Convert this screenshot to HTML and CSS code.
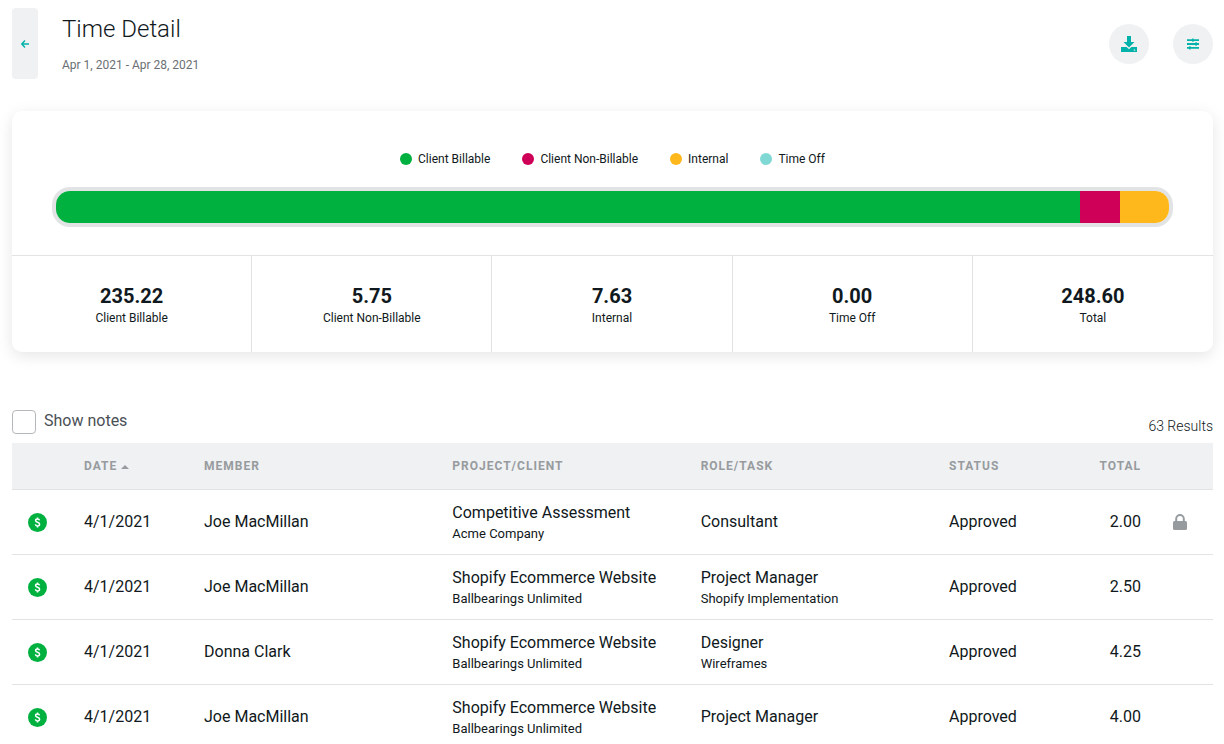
FILE: index.html
```html
<!DOCTYPE html>
<html lang="en">
<head>
  <meta charset="UTF-8" />
  <meta name="viewport" content="width=device-width, initial-scale=1" />
  <title>Time Detail</title>
  <link rel="stylesheet" href="styles.css">
</head>
<body>

  <header class="page-header">
    <button class="back-button" type="button" aria-label="Back">
      <svg width="8" height="8" viewBox="0 0 8 8" fill="none" stroke="currentColor" stroke-width="1.4" aria-hidden="true">
        <path d="M8 4H1M4 0.6L0.8 4L4 7.4" />
      </svg>
    </button>
    <div class="heading">
      <h1>Time Detail</h1>
      <p class="date-range">Apr 1, 2021 - Apr 28, 2021</p>
    </div>
    <div class="actions">
      <button class="round-button" type="button" aria-label="Download">
        <svg width="16" height="16" viewBox="0 0 16 16" fill="currentColor" aria-hidden="true">
          <path d="M6 0h4v6h3.5L8 11.4L2.5 6H6z" />
          <path d="M0 11h5.6L8 13.2L10.4 11H16v5H0zM12.8 13.6v1.2h1.4v-1.2z" fill-rule="evenodd" />
        </svg>
      </button>
      <button class="round-button" type="button" aria-label="Filters">
        <svg width="12" height="12" viewBox="0 0 12 12" fill="currentColor" aria-hidden="true">
          <path d="M0 1.2h12v1.8H0zM0 5.1h12v1.8H0zM0 9h12v1.8H0z" />
          <path d="M5.2 0.4h1.4v3.4H5.2zM8.4 4.3h1.4v3.4H8.4zM2.2 8.2h1.4v3.4H2.2z" />
        </svg>
      </button>
    </div>
  </header>

  <section class="summary" aria-label="Time summary">
    <div class="chart">
      <ul class="legend">
        <li><span class="dot billable"></span>Client Billable</li>
        <li><span class="dot non-billable"></span>Client Non-Billable</li>
        <li><span class="dot internal"></span>Internal</li>
        <li><span class="dot time-off"></span>Time Off</li>
      </ul>
      <div class="bar">
        <div class="billable" style="width: 92%"></div>
        <div class="non-billable" style="width: 3.6%"></div>
        <div class="internal" style="width: 4.4%"></div>
      </div>
    </div>
    <div class="stats">
      <div class="stat"><strong>235.22</strong><span>Client Billable</span></div>
      <div class="stat"><strong>5.75</strong><span>Client Non-Billable</span></div>
      <div class="stat"><strong>7.63</strong><span>Internal</span></div>
      <div class="stat"><strong>0.00</strong><span>Time Off</span></div>
      <div class="stat"><strong>248.60</strong><span>Total</span></div>
    </div>
  </section>

  <div class="toolbar">
    <label class="show-notes"><input type="checkbox" />Show notes</label>
    <span class="results">63 Results</span>
  </div>

  <!-- Shared icons for the table rows -->
  <svg class="sprite" aria-hidden="true">
    <symbol id="dollar" viewBox="0 0 20 20">
      <circle cx="10" cy="10" r="10" fill="#00b140" />
      <path d="M12.1 7.8C11.9 6.9 11.1 6.4 10 6.4c-1.2 0-2 .6-2 1.6 0 2.2 4.2 1.4 4.2 3.8 0 1.1-.9 1.8-2.2 1.8-1.2 0-2.1-.6-2.2-1.7M10 4.7v1.8M10 13.5v1.8" fill="none" stroke="#fff" stroke-width="1.6" />
    </symbol>
    <symbol id="lock" viewBox="0 0 14 16">
      <rect x="0" y="7" width="14" height="9" rx="1.5" fill="#979b9e" />
      <path d="M3.2 7.5V4.8a3.8 3.8 0 0 1 7.6 0v2.7" fill="none" stroke="#979b9e" stroke-width="2" />
    </symbol>
  </svg>

  <table class="entries">
    <thead>
      <tr>
        <th class="col-icon"></th>
        <th class="col-date">Date <span class="sort-up"></span></th>
        <th>Member</th>
        <th>Project/Client</th>
        <th>Role/Task</th>
        <th class="col-status">Status</th>
        <th class="col-total">Total</th>
        <th class="col-icon"></th>
      </tr>
    </thead>
    <tbody>
      <tr>
        <td><svg class="dollar" role="img" aria-label="Billable"><use href="#dollar" /></svg></td>
        <td>4/1/2021</td>
        <td>Joe MacMillan</td>
        <td>Competitive Assessment<small>Acme Company</small></td>
        <td>Consultant</td>
        <td>Approved</td>
        <td class="col-total">2.00</td>
        <td><svg class="lock" role="img" aria-label="Locked"><use href="#lock" /></svg></td>
      </tr>
      <tr>
        <td><svg class="dollar" role="img" aria-label="Billable"><use href="#dollar" /></svg></td>
        <td>4/1/2021</td>
        <td>Joe MacMillan</td>
        <td>Shopify Ecommerce Website<small>Ballbearings Unlimited</small></td>
        <td>Project Manager<small>Shopify Implementation</small></td>
        <td>Approved</td>
        <td class="col-total">2.50</td>
        <td></td>
      </tr>
      <tr>
        <td><svg class="dollar" role="img" aria-label="Billable"><use href="#dollar" /></svg></td>
        <td>4/1/2021</td>
        <td>Donna Clark</td>
        <td>Shopify Ecommerce Website<small>Ballbearings Unlimited</small></td>
        <td>Designer<small>Wireframes</small></td>
        <td>Approved</td>
        <td class="col-total">4.25</td>
        <td></td>
      </tr>
      <tr>
        <td><svg class="dollar" role="img" aria-label="Billable"><use href="#dollar" /></svg></td>
        <td>4/1/2021</td>
        <td>Joe MacMillan</td>
        <td>Shopify Ecommerce Website<small>Ballbearings Unlimited</small></td>
        <td>Project Manager</td>
        <td>Approved</td>
        <td class="col-total">4.00</td>
        <td></td>
      </tr>
    </tbody>
  </table>

</body>
</html>
```
FILE: styles.css
```css
* {
  box-sizing: border-box;
}

body {
  margin: 0;
  padding: 8px 11px 0 12px;
  background: #fff;
  color: #101820;
  font-family: Roboto, sans-serif;
  font-size: 16px;
}

button {
  border: none;
  padding: 0;
  background: #eff1f3;
  color: #00b2a9;
  cursor: pointer;
  display: flex;
  align-items: center;
  justify-content: center;
}

.page-header {
  display: flex;
  align-items: stretch;
  margin-bottom: 32px;
}

.back-button {
  width: 26px;
  border-radius: 4px;
}

.heading {
  flex: 1;
  padding: 5px 24px 6px;
}

h1 {
  margin: 0 0 12px;
  font-size: 24px;
  font-weight: 300;
  line-height: 32px;
}

.date-range {
  margin: 0;
  font-size: 12px;
  line-height: 16px;
  color: #6b6f73;
}

.actions {
  display: flex;
  align-items: center;
  gap: 24px;
}

.round-button {
  width: 40px;
  height: 40px;
  border-radius: 50%;
}

/* Summary card */
.summary {
  border-radius: 10px;
  background: #fff;
  box-shadow: 0 4px 16px rgba(0, 0, 0, 0.1);
}

.chart {
  padding: 40px 40px 28px;
}

.legend {
  display: flex;
  justify-content: center;
  gap: 32px;
  margin: 0 0 20px;
  padding: 0;
  list-style: none;
  font-size: 12px;
  line-height: 16px;
}

.legend li {
  display: flex;
  align-items: center;
  gap: 6px;
}

.dot {
  width: 12px;
  height: 12px;
  border-radius: 50%;
}

.billable {
  background: #00b140;
}

.non-billable {
  background: #ce0058;
}

.internal {
  background: #ffb81c;
}

.time-off {
  background: #7fd8d4;
}

.bar {
  display: flex;
  height: 40px;
  border: 4px solid #e1e3e5;
  border-radius: 18px;
  overflow: hidden;
}

.stats {
  display: grid;
  grid-template-columns: repeat(5, 1fr);
  border-top: 1px solid #e1e3e5;
}

.stat {
  display: flex;
  flex-direction: column;
  align-items: center;
  padding: 28px 0 24px;
  border-right: 1px solid #e1e3e5;
  font-size: 12px;
  line-height: 20px;
}

.stat:last-child {
  border-right: none;
}

.stat strong {
  font-size: 20px;
  font-weight: 700;
  line-height: 24px;
}

/* Toolbar above the table */
.toolbar {
  display: flex;
  justify-content: space-between;
  align-items: flex-end;
  margin-top: 58px;
  padding-bottom: 9px;
}

.show-notes {
  display: flex;
  align-items: flex-start;
  gap: 8px;
  line-height: 22px;
  color: #4a4f55;
}

.show-notes input {
  appearance: none;
  width: 24px;
  height: 24px;
  margin: 0;
  border: 1px solid #b5b8bb;
  border-radius: 4px;
  background: #fff;
}

.show-notes input:checked {
  background: #00b2a9;
}

.results {
  font-size: 14px;
  font-weight: 300;
  line-height: 16px;
}

.sprite {
  display: none;
}

.entries {
  width: 100%;
  table-layout: fixed;
  border-collapse: separate;
  border-spacing: 0;
}

th,
td {
  padding: 0 16px;
  border-bottom: 1px solid #e1e3e5;
  text-align: left;
  vertical-align: middle;
}

th {
  height: 47px;
  background: #eff1f3;
  color: #979b9e;
  font-size: 12px;
  font-weight: 700;
  letter-spacing: 1px;
  text-transform: uppercase;
}

td {
  height: 65px;
  line-height: 24px;
}

td small {
  display: block;
  font-size: 13px;
  line-height: 18px;
}

.col-icon {
  width: 56px;
}

.col-date,
.col-status {
  width: 120px;
}

.col-total {
  width: 104px;
  text-align: right;
}

.sort-up {
  display: inline-block;
  vertical-align: middle;
  border: 4px solid transparent;
  border-top: none;
  border-bottom-color: #979b9e;
}

.dollar,
.lock {
  display: block;
}

.dollar {
  width: 19px;
  height: 19px;
}

.lock {
  width: 14px;
  height: 16px;
}
```
